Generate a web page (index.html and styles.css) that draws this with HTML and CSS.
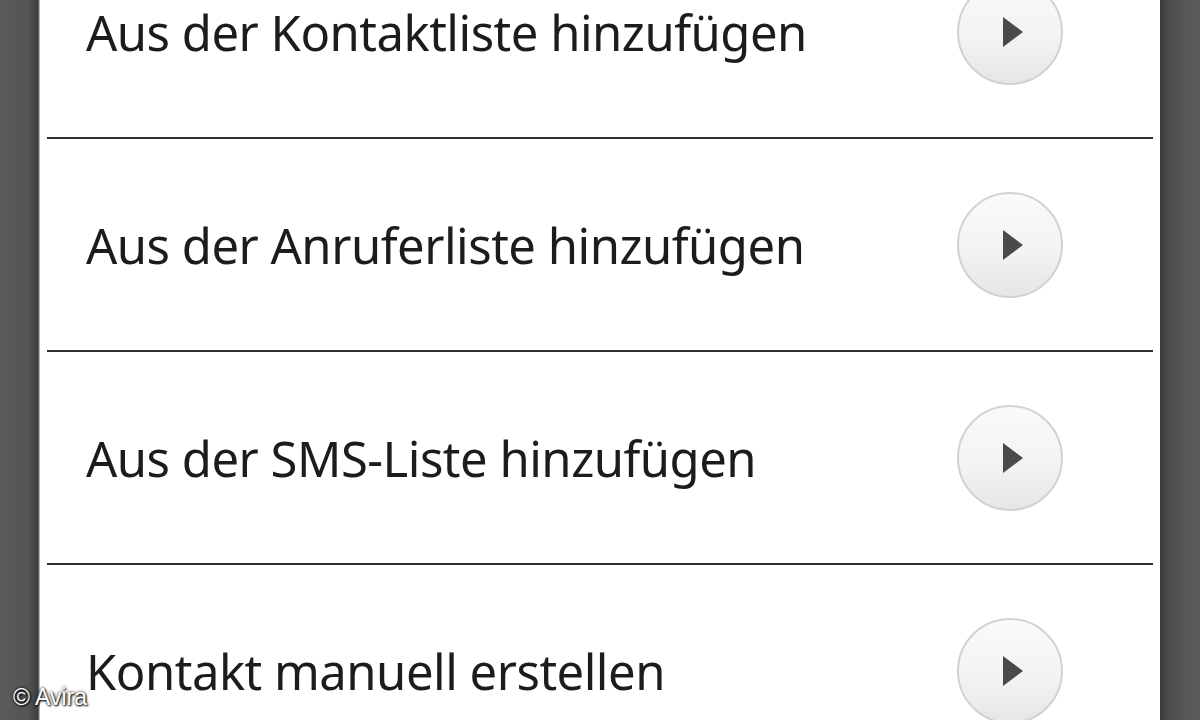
FILE: index.html
```html
<!DOCTYPE html>
<html lang="de">

<head>
  <meta charset="UTF-8" />
  <meta name="viewport" content="width=device-width, initial-scale=1.0" />
  <title>Kontakt hinzufügen</title>
  <link rel="stylesheet" href="styles.css">
</head>

<body>
  <div class="screen">
    <div class="side side-left"></div>

    <div class="panel">
      <ul class="menu">
        <li class="menu-item">
          <span class="menu-label">Aus der Kontaktliste hinzufügen</span>
          <button class="go-btn" aria-label="Öffnen">
            <svg viewBox="0 0 20 30" width="20" height="30"><polygon points="0,0 20,15 0,30" /></svg>
          </button>
        </li>
        <li class="menu-item">
          <span class="menu-label">Aus der Anruferliste hinzufügen</span>
          <button class="go-btn" aria-label="Öffnen">
            <svg viewBox="0 0 20 30" width="20" height="30"><polygon points="0,0 20,15 0,30" /></svg>
          </button>
        </li>
        <li class="menu-item">
          <span class="menu-label">Aus der SMS-Liste hinzufügen</span>
          <button class="go-btn" aria-label="Öffnen">
            <svg viewBox="0 0 20 30" width="20" height="30"><polygon points="0,0 20,15 0,30" /></svg>
          </button>
        </li>
        <li class="menu-item">
          <span class="menu-label">Kontakt manuell erstellen</span>
          <button class="go-btn" aria-label="Öffnen">
            <svg viewBox="0 0 20 30" width="20" height="30"><polygon points="0,0 20,15 0,30" /></svg>
          </button>
        </li>
      </ul>
    </div>

    <div class="side side-right"></div>
  </div>

  <div class="credit">© Avira</div>
</body>

</html>
```

FILE: styles.css
```css
/* Base */
* {
  box-sizing: border-box;
  margin: 0;
  padding: 0;
}

body {
  width: 1200px;
  height: 720px;
  overflow: hidden;
  background: #555;
  font-family: 'Noto Sans', 'Open Sans', sans-serif;
  position: relative;
}

.screen {
  display: flex;
  height: 100%;
}

/* Dark frame on both sides */
.side {
  width: 40px;
  flex-shrink: 0;
}

.side-left {
  background: linear-gradient(90deg, #5a5a5a 0%, #555 70%, #3c3c3c 95%, #d8d8d8 100%);
}

.side-right {
  background: linear-gradient(90deg, #3a3a3a 0%, #4a4a4a 20%, #575757 60%, #5a5a5a 100%);
}

/* List panel */
.panel {
  flex: 1;
  background: #fff;
  overflow: hidden;
  padding: 0 7px;
}

.menu {
  list-style: none;
  margin-top: -74px;
}

.menu-item {
  height: 213px;
  display: flex;
  align-items: center;
  justify-content: space-between;
  padding: 0 90px 0 39px;
  border-bottom: 2px solid #2e2e2e;
}

.menu-label {
  font-size: 49px;
  color: #1c1c1c;
  letter-spacing: -0.5px;
}

.go-btn {
  width: 106px;
  height: 106px;
  border-radius: 50%;
  border: 2px solid #d2d2d2;
  background: linear-gradient(180deg, #fafafa 0%, #f3f3f3 55%, #e6e6e6 100%);
  display: flex;
  align-items: center;
  justify-content: center;
  padding-left: 6px;
  cursor: pointer;
}

.go-btn svg {
  fill: #4a4a4a;
}

/* Watermark */
.credit {
  position: absolute;
  left: 13px;
  bottom: 9px;
  font-family: 'Liberation Sans', Arial, sans-serif;
  font-size: 23px;
  color: #fff;
  text-shadow: 0 0 3px #000, 1px 1px 2px #000;
}
```
